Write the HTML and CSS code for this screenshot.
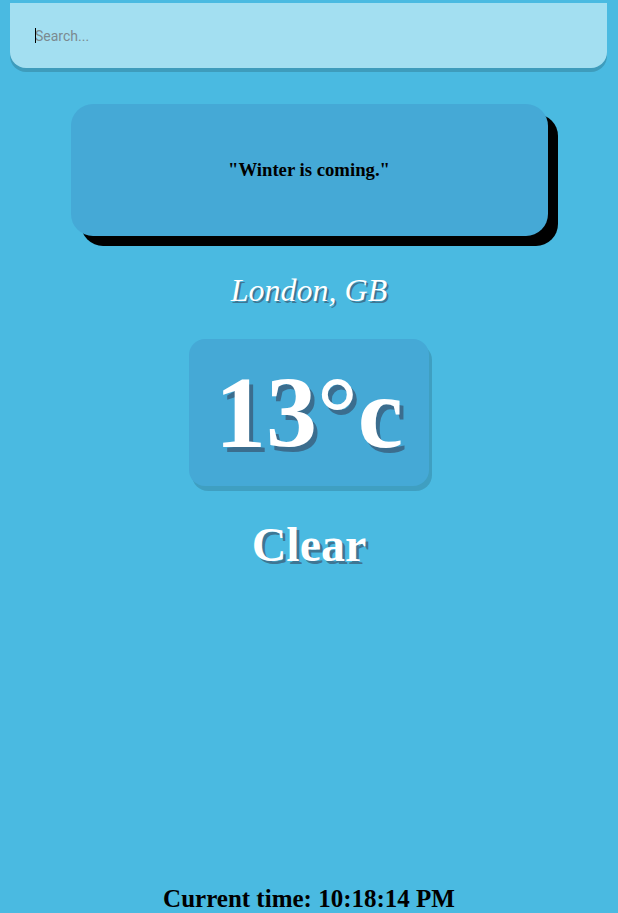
FILE: index.html
```html
<!DOCTYPE html>
<html lang="en">
<head>
<meta charset="utf-8">
<title>Weather</title>
<link rel="stylesheet" href="styles.css">
</head>
<body>
<main class="app">
  <div class="search-box">
    <input class="search-bar" type="text" placeholder="Search...">
    <span class="caret"></span>
  </div>
  <div class="quote-box">
    <p class="quote">"Winter is coming."</p>
  </div>
  <div class="location-box">
    <div class="location">London, GB</div>
  </div>
  <div class="weather-box">
    <div class="temp">13°c</div>
    <div class="weather">Clear</div>
  </div>
  <div class="time">Current time: 10:18:14 PM</div>
</main>
</body>
</html>
```

FILE: styles.css
```css
* {
  box-sizing: border-box;
}

html, body {
  margin: 0;
  padding: 0;
}

body {
  background: #4abae1;
  font-family: "Liberation Serif", "Times New Roman", serif;
}

.app {
  min-height: 100vh;
  display: flex;
  flex-direction: column;
  align-items: center;
}

.search-box {
  position: relative;
  align-self: stretch;
  padding: 3px 11px 0 10px;
}

.search-bar {
  display: block;
  width: 100%;
  height: 65px;
  padding: 0 25px;
  border: none;
  outline: none;
  appearance: none;
  background: #a3dff1;
  border-radius: 0 0 16px 16px;
  box-shadow: 0 4px rgba(0, 0, 0, 0.16);
  font-family: Roboto, "Liberation Sans", sans-serif;
  font-size: 14px;
  color: #313131;
}

.search-bar::placeholder {
  color: #7b8a90;
}

.caret {
  position: absolute;
  left: 35px;
  top: 28px;
  width: 1px;
  height: 15px;
  background: #000;
}

.quote-box {
  margin-top: 36px;
  width: 477px;
  height: 132px;
  background: #45a9d6;
  border-radius: 22px;
  box-shadow: 10px 10px #000;
  display: flex;
  align-items: center;
  justify-content: center;
}

.quote {
  margin: 0;
  font-size: 18.72px;
  font-weight: 700;
  color: #000;
}

.location-box {
  margin-top: 36px;
}

.location {
  color: #fff;
  font-size: 32px;
  font-style: italic;
  text-align: center;
  text-shadow: 2px 2px rgba(50, 50, 70, 0.5);
}

.weather-box {
  display: flex;
  flex-direction: column;
  align-items: center;
}

.temp {
  margin-top: 30px;
  width: 240px;
  height: 147px;
  background: #45a9d6;
  border-radius: 16px;
  box-shadow: 3px 5px rgba(0, 0, 0, 0.14);
  color: #fff;
  font-size: 102px;
  font-weight: 700;
  text-align: center;
  line-height: 147px;
  text-shadow: 4px 5px rgba(50, 50, 70, 0.5);
}

.weather {
  margin-top: 31px;
  color: #fff;
  font-size: 48px;
  font-weight: 700;
  text-shadow: 3px 3px rgba(50, 50, 70, 0.5);
}

.time {
  margin-top: auto;
  font-size: 25px;
  line-height: 28px;
  font-weight: 700;
  color: #000;
}
```
